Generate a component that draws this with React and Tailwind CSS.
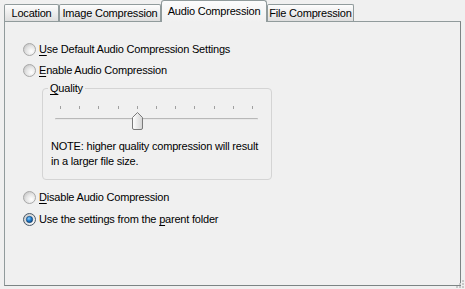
import React from "react";

const FONT = { fontFamily: '"Liberation Sans", Arial, sans-serif' };

const TABS = [
  { label: "Location", width: "w-[55px]" },
  { label: "Image Compression", width: "w-[102px]" },
  { label: "Audio Compression", width: "w-[106px]", active: true },
  { label: "File Compression", width: "w-[87px]" },
];

function Radio({ checked }) {
  return (
    <svg width="13" height="13" viewBox="0 0 13 13" className="shrink-0">
      <defs>
        <radialGradient id={checked ? "rgc" : "rgu"} cx="0.65" cy="0.65" r="0.7">
          <stop offset="0" stopColor="#ffffff" />
          <stop offset="0.6" stopColor="#e4e4e4" />
          <stop offset="1" stopColor="#c8c8c8" />
        </radialGradient>
        <radialGradient id="dot" cx="0.4" cy="0.35" r="0.7">
          <stop offset="0" stopColor="#8fd0ff" />
          <stop offset="0.5" stopColor="#1f7fd0" />
          <stop offset="1" stopColor="#0b3f7a" />
        </radialGradient>
      </defs>
      <circle cx="6.5" cy="6.5" r="6" fill={`url(#${checked ? "rgc" : "rgu"})`} stroke={checked ? "#4a5a6a" : "#a8a8a8"} />
      {checked && <circle cx="6.5" cy="6.5" r="3.2" fill="url(#dot)" stroke="#123c66" strokeWidth="0.6" />}
    </svg>
  );
}

function Mn({ children }) {
  return <span className="underline underline-offset-[2px] decoration-1">{children}</span>;
}

function RadioRow({ checked, children, className = "" }) {
  return (
    <div className={`flex items-center gap-[3px] h-[16px] ${className}`}>
      <Radio checked={checked} />
      <span className="text-[11px] leading-[16px] tracking-[-0.2px] text-black whitespace-nowrap">{children}</span>
    </div>
  );
}

function Slider() {
  const ticks = Array.from({ length: 11 }, (_, i) => 5 + i * 19.2);
  return (
    <div className="relative ml-[12px] mt-[9px] w-[203px] h-[27px]">
      {ticks.map((x) => (
        <div key={x} className="absolute top-[2px] w-px h-[3px] bg-[#a0a0a0]" style={{ left: x }} />
      ))}
      <div className="absolute top-[14px] left-0 right-0 h-[2px] rounded-[1px] bg-[#b8b8b8] border-b border-[#e8e8e8]" />
      <svg width="11" height="18" viewBox="0 0 11 18" className="absolute top-[8px] left-[77px]">
        <defs>
          <linearGradient id="thumb" x1="0" y1="0" x2="1" y2="0">
            <stop offset="0" stopColor="#ffffff" />
            <stop offset="1" stopColor="#d4d4d4" />
          </linearGradient>
        </defs>
        <path d="M0.5 5.5 L5.5 0.5 L10.5 5.5 L10.5 16 Q10.5 17.5 9 17.5 L2 17.5 Q0.5 17.5 0.5 16 Z" fill="url(#thumb)" stroke="#7a7a7a" />
      </svg>
    </div>
  );
}

export default function App() {
  return (
    <div className="w-[465px] h-[289px] bg-[#f0f0f0] relative overflow-hidden" style={FONT}>
      {/* Tabs */}
      <div className="flex items-end h-[21px] pl-[4px]">
        {TABS.map((t) =>
          t.active ? (
            <div
              key={t.label}
              className={`${t.width} h-[22px] -mb-px relative z-10 flex items-start justify-center pt-[3px] text-[11px] leading-[14px] tracking-[-0.2px] whitespace-nowrap text-black border border-b-0 border-[#919b9c] rounded-t-[3px] bg-gradient-to-b from-[#fcfcfc] to-[#f0f0f0]`}
            >
              {t.label}
            </div>
          ) : (
            <div
              key={t.label}
              className={`${t.width} h-[17px] flex items-center justify-center text-[11px] leading-[14px] tracking-[-0.2px] whitespace-nowrap text-black border border-b-0 border-[#919b9c] rounded-t-[2px] bg-gradient-to-b from-[#fdfdfd] to-[#dedede]`}
            >
              {t.label}
            </div>
          )
        )}
      </div>

      {/* Panel */}
      <div className="ml-[4px] w-[457px] h-[265px] border border-[#919b9c] border-r-[#7c8484] border-b-[#7c8484] bg-[#f0f0f0] pl-[18px] pt-[19px] flex flex-col">
        <RadioRow>
          <Mn>U</Mn>se Default Audio Compression Settings
        </RadioRow>
        <RadioRow className="mt-[5px]">
          <Mn>E</Mn>nable Audio Compression
        </RadioRow>

        <fieldset className="ml-[19px] mt-[4px] w-[230px] h-[98px] border border-[#d4d4d4] rounded-[4px]">
          <legend className="ml-[5px] px-[2px] text-[11px] leading-[13px] tracking-[-0.2px] text-black">
            <Mn>Q</Mn>uality
          </legend>
          <Slider />
          <p className="ml-[8px] mt-[8px] text-[11px] leading-[15px] tracking-[-0.2px] text-black whitespace-nowrap">
            NOTE: higher quality compression will result
            <br />
            in a larger file size.
          </p>
        </fieldset>

        <RadioRow className="mt-[9px]">
          <Mn>D</Mn>isable Audio Compression
        </RadioRow>
        <RadioRow checked className="mt-[6px]">
          Use the settings from the <Mn>p</Mn>arent folder
        </RadioRow>
      </div>

      {/* Resize grip */}
      <div className="absolute right-[1px] bottom-[1px] grid grid-cols-3 gap-[1px]">
        {[0, 0, 1, 0, 1, 1, 1, 1, 1].map((v, i) => (
          <div key={i} className={`w-[2px] h-[2px] ${v ? "bg-[#c8c8c8]" : "bg-transparent"}`} />
        ))}
      </div>
    </div>
  );
}
